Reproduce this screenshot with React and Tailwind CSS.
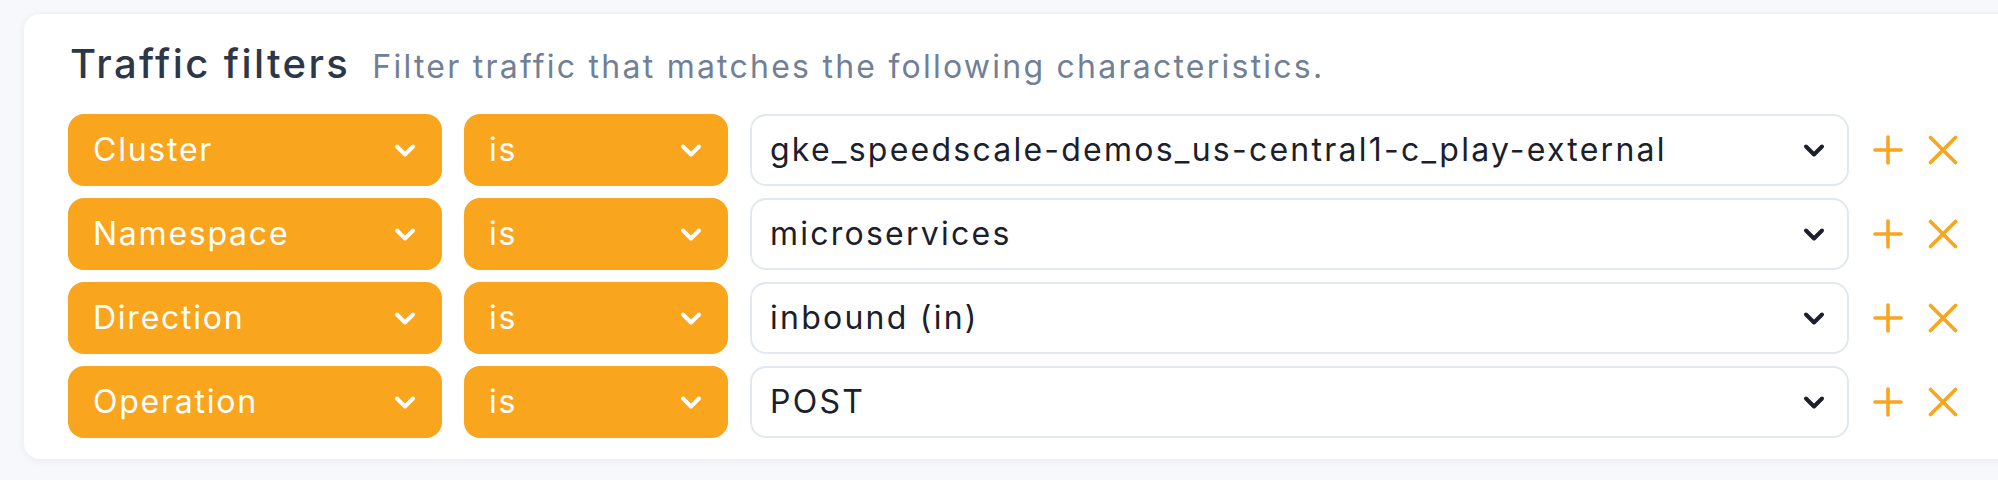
import React from 'react';

const filters = [
  { field: 'Cluster', op: 'is', value: 'gke_speedscale-demos_us-central1-c_play-external' },
  { field: 'Namespace', op: 'is', value: 'microservices' },
  { field: 'Direction', op: 'is', value: 'inbound (in)' },
  { field: 'Operation', op: 'is', value: 'POST' },
];

const Chevron = ({ className }) => (
  <svg width="22" height="15" viewBox="0 0 22 15" fill="none" className={className}>
    <polyline points="3,3.5 11,11.5 19,3.5" stroke="currentColor" strokeWidth="4" strokeLinecap="round" strokeLinejoin="round" />
  </svg>
);

const PlusIcon = () => (
  <svg width="30" height="30" viewBox="0 0 30 30" fill="none" className="text-[#f9a51e]">
    <path d="M15 2v26M2 15h26" stroke="currentColor" strokeWidth="3.6" strokeLinecap="round" />
  </svg>
);

const CloseIcon = () => (
  <svg width="30" height="30" viewBox="0 0 30 30" fill="none" className="text-[#f9a51e]">
    <path d="M2.5 2.5l25 25M27.5 2.5l-25 25" stroke="currentColor" strokeWidth="3.6" strokeLinecap="round" />
  </svg>
);

const OrangeSelect = ({ label, width }) => (
  <button className={`${width} h-full shrink-0 flex items-center justify-between bg-[#f9a51e] rounded-[16px] pl-[25px] pr-[26px] text-white text-[32px] leading-none tracking-[0.055em]`}>
    <span>{label}</span>
    <Chevron className="text-white" />
  </button>
);

export default function App() {
  return (
    <div className="w-full h-[480px] bg-[#f7f8fb] pt-[14px] pl-[24px] overflow-hidden" style={{ fontFamily: 'Inter, "Noto Sans", sans-serif' }}>
      <div className="w-[2000px] h-[445px] bg-white rounded-[16px] shadow-[0_1px_8px_rgba(30,41,59,0.07)] pl-[44px]">
        <div className="h-[100px] flex items-center">
          <div className="flex items-baseline gap-[22px]">
            <h2 className="text-[40px] leading-none font-medium text-[#2d3748] pl-[2px] tracking-[0.06em]">Traffic filters</h2>
            <p className="text-[32px] leading-none text-[#718096] tracking-[0.07em]">Filter traffic that matches the following characteristics.</p>
          </div>
        </div>

        <div className="flex flex-col gap-[12px]">
          {filters.map((f) => (
            <div key={f.field} className="h-[72px] flex items-center">
              <OrangeSelect label={f.field} width="w-[374px]" />
              <div className="w-[22px] shrink-0" />
              <OrangeSelect label={f.op} width="w-[264px]" />
              <div className="w-[22px] shrink-0" />
              <div className="w-[1099px] h-full shrink-0 flex items-center justify-between bg-white border-2 border-[#e2e8f0] rounded-[16px] pl-[18px] pr-[22px] text-[#1a202c] text-[32px] leading-none tracking-[0.07em]">
                <span>{f.value}</span>
                <Chevron className="text-[#1a202c]" />
              </div>
              <div className="flex items-center gap-[25px] ml-[24px]">
                <PlusIcon />
                <CloseIcon />
              </div>
            </div>
          ))}
        </div>
      </div>
    </div>
  );
}
